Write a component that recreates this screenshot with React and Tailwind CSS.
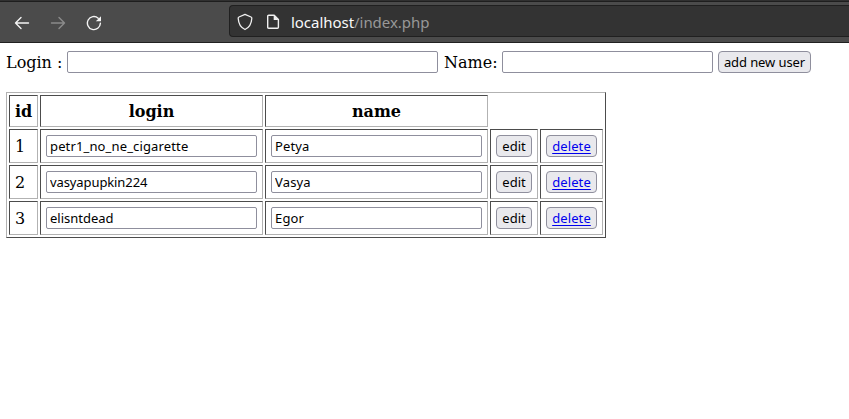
import React from "react";

const users = [
  { id: 1, login: "petr1_no_ne_cigarette", name: "Petya", loginSpacing: "tracking-[0.14px]" },
  { id: 2, login: "vasyapupkin224", name: "Vasya", loginSpacing: "tracking-[-0.1px]" },
  { id: 3, login: "elisntdead", name: "Egor", loginSpacing: "tracking-[0px]" },
];

const ui = "font-['Noto_Sans','Open_Sans',sans-serif] text-[13px] leading-4 text-black";

function Cell({ className = "", children }) {
  return (
    <div
      className={`flex items-center border border-t-[#4c4c4c] border-l-[#4c4c4c] border-r-[#b2b2b2] border-b-[#b2b2b2] px-[5px] ${className}`}
    >
      {children}
    </div>
  );
}

function Field({ className = "", ...props }) {
  return (
    <input
      type="text"
      spellCheck={false}
      className={`h-[22px] shrink-0 rounded-[2px] border border-[#8f8f9d] bg-white px-[3px] pb-px outline-none ${ui} ${className}`}
      {...props}
    />
  );
}

function Button({ className = "", children }) {
  return (
    <button
      className={`flex h-[22px] shrink-0 items-center justify-center whitespace-nowrap rounded-[4px] border border-[#8f8f9d] bg-[#e9e9ed] pb-px ${ui} ${className}`}
    >
      {children}
    </button>
  );
}

function Toolbar() {
  return (
    <header className="flex h-[43px] items-center border-b border-[#202020] bg-[#4b4b4b] shadow-[inset_0_1px_0_#303030,inset_0_2px_0_#1e1e1e]">
      <div className="flex items-center gap-5 pt-[3px] pl-3.5">
        <svg width="16" height="16" viewBox="0 0 16 16" fill="none" stroke="#f4f4f4" strokeWidth="1.4" strokeLinecap="round" strokeLinejoin="round">
          <path d="M14.5 8H1.5M7 2.5L1.5 8L7 13.5" />
        </svg>
        <svg width="16" height="16" viewBox="0 0 16 16" fill="none" stroke="#8b8b8b" strokeWidth="1.4" strokeLinecap="round" strokeLinejoin="round">
          <path d="M1.5 8H14.5M9 2.5L14.5 8L9 13.5" />
        </svg>
        <svg width="16" height="16" viewBox="0 0 16 16" fill="none" stroke="#f4f4f4" strokeWidth="1.4" strokeLinecap="round">
          <path d="M14.4 8.3A6.5 6.5 0 1 1 12.2 3.2" />
          <path d="M15 1.2V6.2H9.8Z" fill="#f4f4f4" stroke="none" />
        </svg>
      </div>
      <div className="ml-[127px] flex h-8 flex-1 items-center rounded-l-[4px] border border-r-0 border-[#202020] bg-[#333333] pl-[7px]">
        <svg className="mt-0.5" width="16" height="18" viewBox="0 0 16 18" fill="none" stroke="#f0f0f0" strokeWidth="1.3" strokeLinejoin="round">
          <path d="M8 1.3L14 4C14.7 4.3 14.9 4.8 14.8 5.5C14.5 10 12.5 14.5 8 16.5C3.5 14.5 1.5 10 1.2 5.5C1.1 4.8 1.3 4.3 2 4Z" />
        </svg>
        <svg className="mt-0.5 ml-3" width="16" height="16" viewBox="0 0 16 16" fill="none" stroke="#f0f0f0" strokeWidth="1.4" strokeLinejoin="round">
          <path d="M4 1.3H9.2L13.4 5.5V13.3Q13.4 14.3 12.4 14.3H3.7Q2.7 14.3 2.7 13.3V2.3Q2.7 1.3 3.7 1.3Z" />
          <path d="M8.7 1V6H13.5Z" fill="#f0f0f0" stroke="none" />
        </svg>
        <span className="ml-[10px] pt-0.5 font-['Noto_Sans','Open_Sans',sans-serif] text-[15px] leading-5 tracking-[-0.04px] text-[#f9f9fa]">
          localhost<span className="text-[#989898]">/index.php</span>
        </span>
      </div>
    </header>
  );
}

export default function App() {
  return (
    <div className="h-[419px] w-full overflow-hidden bg-white font-['DejaVu_Serif',serif] text-base leading-[19px] text-black">
      <Toolbar />
      <main className="pt-2 pl-1.5">
        <form className="flex h-[22px] items-center" onSubmit={(e) => e.preventDefault()}>
          <label className="w-[61px] shrink-0 whitespace-nowrap">Login :</label>
          <Field className="w-[371px]" />
          <label className="ml-1.5 w-[58px] shrink-0 whitespace-nowrap">Name:</label>
          <Field className="w-[211px]" />
          <Button className="ml-[5px] w-[93px] tracking-[-0.1px]">add new user</Button>
        </form>
        <section className="mt-[19px] grid w-[600px] grid-cols-[29px_223px_223px_48px_63px] gap-0.5 border border-t-[#b2b2b2] border-l-[#b2b2b2] border-r-[#4c4c4c] border-b-[#4c4c4c] p-0.5">
          <Cell className="h-8 justify-center font-bold">id</Cell>
          <Cell className="h-8 justify-center font-bold">login</Cell>
          <Cell className="h-8 justify-center font-bold">name</Cell>
          <div className="col-span-2" />
          {users.map((user) => (
            <React.Fragment key={user.id}>
              <Cell className="h-[34px]">{user.id}</Cell>
              <Cell className="h-[34px]">
                <Field className={`w-[211px] ${user.loginSpacing}`} defaultValue={user.login} />
              </Cell>
              <Cell className="h-[34px]">
                <Field className="w-[211px] tracking-[0.15px]" defaultValue={user.name} />
              </Cell>
              <Cell className="h-[34px]">
                <Button className="w-9">edit</Button>
              </Cell>
              <Cell className="h-[34px]">
                <Button className="w-[51px] tracking-[0.1px]">
                  <a className="text-[#0000ee] underline underline-offset-2">delete</a>
                </Button>
              </Cell>
            </React.Fragment>
          ))}
        </section>
      </main>
    </div>
  );
}
